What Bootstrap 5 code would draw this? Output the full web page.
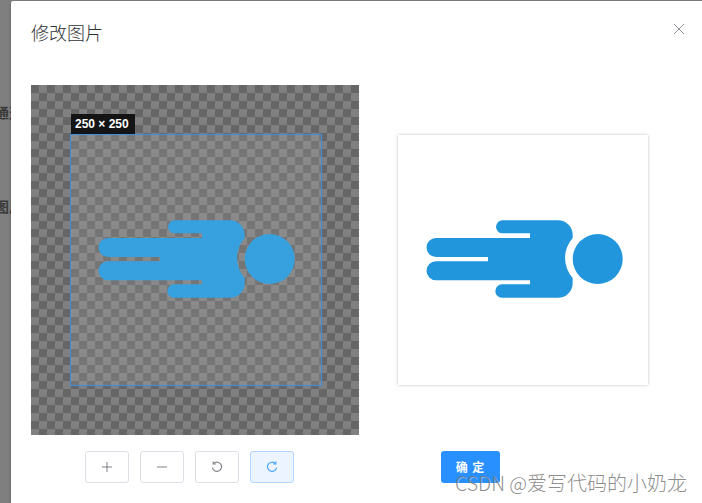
<!DOCTYPE html>
<html lang="zh">
<head>
<meta charset="utf-8">
<title>修改图片</title>
<link href="https://cdn.jsdelivr.net/npm/bootstrap@5.3.0/dist/css/bootstrap.min.css" rel="stylesheet">
<style>
html,body{height:100%;overflow:hidden}
body{background:#7f7f7f;font-family:"Liberation Sans","Noto Sans CJK SC",sans-serif;color:#303133}
.stage{height:503px;padding-top:1px}
.ghost-col{width:11px;flex:none;overflow:hidden;font-size:14px;font-weight:700;color:#3a3a3a;line-height:20px}
.ghost-col div{white-space:nowrap;width:30px;margin-left:-5px}
.ghost-a{margin-top:102px}
.ghost-b{margin-top:74px}
.sheet{background:#fff;flex:1 1 auto;border-radius:2px 0 0 0;box-shadow:0 1px 3px rgba(0,0,0,.3);position:relative;min-width:0}
.sheet-head{padding:19px 20px 0;height:84px}
.sheet-title{font-size:18px;line-height:24px;font-weight:300;color:#303133;margin:0;font-family:"Noto Sans CJK SC",sans-serif}
.closer{position:absolute;top:20px;right:15px;width:16px;height:16px;padding:0;border:0;background:none;color:#909399;line-height:0}
.work{display:grid;grid-template-columns:328px 250px;column-gap:39px;padding-left:20px;row-gap:16px}
.cropper{height:350px;position:relative;background-color:#666;background-image:conic-gradient(#808080 25%,#666 0 50%,#808080 0 75%,#666 0);background-size:16px 16px}
.crop-face{position:absolute;left:39px;top:49px;width:252px;height:252px;border:1px solid #3f8ddb;background-color:#757575;background-image:conic-gradient(#8a8a8a 25%,#757575 0 50%,#8a8a8a 0 75%,#757575 0);background-size:16px 16px;background-position:-40px -50px;color:#37a0df}
.crop-info{position:absolute;left:0;top:-21px;height:20px;line-height:20px;background:#141414;color:#fff;font-size:12px;font-weight:700;padding:0 6px 0 4px;white-space:nowrap}
.shape{display:block;width:250px;height:250px}
.crop-face .shape{margin-left:-.6px}
.preview-wrap{padding-top:50px}
.preview-box{width:250px;height:250px;background:#fff;box-shadow:0 0 3px rgba(0,0,0,.25);color:#2196dc}
.tools{display:flex;gap:11px;padding-left:54px}
.tool{width:44px;height:32px;padding:0;display:flex;align-items:center;justify-content:center;background:#fff;border:1px solid #dcdfe6;border-radius:3px;color:#7d7f85}
.tool-on{background:#ecf5ff;border-color:#b3d8ff;color:#409eff}
.confirm{width:59px;height:32px;margin-left:43px;padding:0;border:0;border-radius:3px;background:#2890ff;color:#fff;font-size:12px;font-weight:700;letter-spacing:1px;font-family:"Noto Sans CJK SC",sans-serif}
.stamp{position:absolute;right:15px;top:470px;font-size:20px;line-height:26px;color:rgba(120,120,120,.85);white-space:nowrap;text-shadow:1px 1px 0 rgba(255,255,255,.35);font-family:"Noto Sans CJK SC",sans-serif;font-weight:300}
.stamp-latin{font-size:19.5px}
</style>
</head>
<body>
<svg width="0" height="0" class="d-block" aria-hidden="true">
  <symbol id="person" viewBox="0 0 250 250">
    <circle cx="199.7" cy="124" r="25"/>
    <path d="M104.5 85.3H160A14.7 14.7 0 0 1 174.7 100V103A30 30 0 0 0 174.7 143V148A14.7 14.7 0 0 1 160 162.7H104A6.7 6.7 0 0 1 104 149.3H132V145.3H38A9.5 9.5 0 0 1 38 126.3H90V122H38A9.5 9.5 0 0 1 38 103H132V98.3H104.5A6.5 6.5 0 0 1 104.5 85.3Z"/>
  </symbol>
</svg>
<div class="stage d-flex">
  <div class="ghost-col">
    <div class="ghost-a">通道</div>
    <div class="ghost-b">图片</div>
  </div>
  <div class="sheet">
    <div class="sheet-head">
      <h5 class="sheet-title">修改图片</h5>
      <button class="closer" type="button" aria-label="关闭">
        <svg width="16" height="16" viewBox="0 0 16 16" fill="none" stroke="currentColor" stroke-width="1"><path d="M3 3l10 10M13 3L3 13"/></svg>
      </button>
    </div>
    <div class="work">
      <div class="cropper">
        <div class="crop-face">
          <div class="crop-info">250 × 250</div>
          <svg class="shape" fill="currentColor"><use href="#person"/></svg>
        </div>
      </div>
      <div class="preview-wrap">
        <div class="preview-box"><svg class="shape" fill="currentColor"><use href="#person"/></svg></div>
      </div>
      <div class="tools">
        <button class="tool" type="button" aria-label="放大"><svg width="14" height="14" viewBox="0 0 14 14" fill="none" stroke="currentColor" stroke-width="1"><path d="M2 7h10M7 2v10"/></svg></button>
        <button class="tool" type="button" aria-label="缩小"><svg width="14" height="14" viewBox="0 0 14 14" fill="none" stroke="currentColor" stroke-width="1"><path d="M2 7h10"/></svg></button>
        <button class="tool" type="button" aria-label="左旋"><svg width="14" height="14" viewBox="0 0 14 14" fill="none" stroke="currentColor" stroke-width="1.1"><path d="M3.6 3.6A4.6 4.6 0 1 1 2.4 7.5"/><path d="M3.2 1.4v2.6h2.6"/></svg></button>
        <button class="tool tool-on" type="button" aria-label="右旋"><svg width="14" height="14" viewBox="0 0 14 14" fill="none" stroke="currentColor" stroke-width="1.1"><path d="M10.4 3.6A4.6 4.6 0 1 0 11.6 7.5"/><path d="M10.8 1.4v2.6H8.2"/></svg></button>
      </div>
      <div><button class="confirm" type="button">确 定</button></div>
    </div>
  </div>
</div>
<div class="stamp"><span class="stamp-latin">CSDN @</span>爱写代码的小奶龙</div>
</body>
</html>
